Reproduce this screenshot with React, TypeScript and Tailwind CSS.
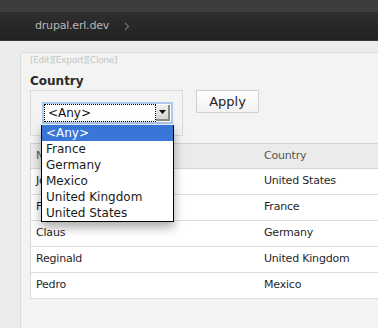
import React from 'react';

const rows = [
  { name: 'John', country: 'United States' },
  { name: 'Frank', country: 'France' },
  { name: 'Claus', country: 'Germany' },
  { name: 'Reginald', country: 'United Kingdom' },
  { name: 'Pedro', country: 'Mexico' },
];

const options = ['<Any>', 'France', 'Germany', 'Mexico', 'United Kingdom', 'United States'];

const App: React.FC = () => {
  return (
    <div
      className="relative w-[378px] h-[328px] overflow-hidden flex flex-col bg-[#ececec]"
      style={{ fontFamily: '"DejaVu Sans", Verdana, sans-serif' }}
    >
      {/* top bar */}
      <div className="flex flex-col shrink-0 border-b border-[#3a3a3a]">
        <div className="h-[12px] bg-[#3d3d3d]" />
        <div className="h-[28px] bg-gradient-to-b from-[#2e2e2e] to-[#222222] flex items-center pl-[35px] gap-[15px]">
          <span className="text-[11px] tracking-[-0.2px] text-[#b8b8b8] mt-[1px]">drupal.erl.dev</span>
          <svg width="6" height="9" viewBox="0 0 6 9" className="mt-[1px]">
            <path d="M1 1l3.5 3.5L1 8" fill="none" stroke="#6f6f6f" strokeWidth="1.3" />
          </svg>
        </div>
      </div>

      {/* page */}
      <div className="flex-1 pt-[11px] pl-[20px] flex flex-col">
        <div className="flex-1 bg-[#f3f3f3] border-t border-l border-[#dcdcdc] rounded-tl-[4px] pl-[9px] flex flex-col">
          <div className="h-[12px] leading-[12px] text-[9px] tracking-[-0.3px] text-[#c4c4c4] mt-[1px]">
            [Edit][Export][Clone]
          </div>
          <div className="mt-[7px] h-[16px] leading-[16px] text-[12px] font-bold text-[#2a2a2a]">Country</div>

          <div className="mt-[1px] flex items-start">
            <div className="w-[153px] h-[46px] border border-[#dadada] pl-[11px] pt-[11px]">
              {/* select */}
              <div className="w-[131px] h-[22px] border-2 border-[#a9c9ee] bg-white flex items-center">
                <div className="h-[18px] w-[112px] border border-dotted border-black flex items-center pl-[3px]">
                  <span className="text-[12px] text-[#111]">&lt;Any&gt;</span>
                </div>
                <div className="w-[14px] h-[16px] bg-gradient-to-b from-[#eeeeee] to-[#d6d6d6] border-r-2 border-b-2 border-[#8a8a8a] flex items-center justify-center">
                  <svg width="7" height="4" viewBox="0 0 7 4">
                    <path d="M0 0h7L3.5 4z" fill="#111" />
                  </svg>
                </div>
              </div>
            </div>
            <button className="ml-[13px] w-[63px] h-[23px] border border-[#cfcfcf] rounded-[1px] bg-gradient-to-b from-white to-[#f1f1f1] text-[13px] text-[#222] flex items-center justify-center">
              Apply
            </button>
          </div>

          {/* table */}
          <div className="mt-[7px] border-l border-[#d8d8d8] text-[11px] tracking-[-0.2px]">
            <div className="grid grid-cols-[228px_1fr] h-[26px] bg-[#ebebeb] border-t border-b border-[#d4d4d4] items-center">
              <div className="pl-[5px] text-[#555]">Name</div>
              <div className="pl-[5px] text-[#555]">Country</div>
            </div>
            {rows.map((r) => (
              <div key={r.name} className="grid grid-cols-[228px_1fr] h-[26px] bg-white border-b border-[#dcdcdc] items-center">
                <div className="pl-[5px] text-[#1f1f2a]">{r.name}</div>
                <div className="pl-[5px] text-[#1f1f2a]">{r.country}</div>
              </div>
            ))}
          </div>
        </div>
      </div>

      {/* open dropdown */}
      <div className="absolute left-[41px] top-[125px] w-[133px] bg-white border-x border-b border-black shadow-[0_5px_10px_rgba(0,0,0,0.35)] text-[12px]">
        {options.map((o, i) => (
          <div
            key={o}
            className={
              i === 0
                ? 'h-[16px] leading-[16px] pl-[4px] bg-[#3a76d8] text-white'
                : 'h-[16px] leading-[16px] pl-[4px] text-[#1a1a1a]'
            }
          >
            {o}
          </div>
        ))}
      </div>
    </div>
  );
};

export default App;
